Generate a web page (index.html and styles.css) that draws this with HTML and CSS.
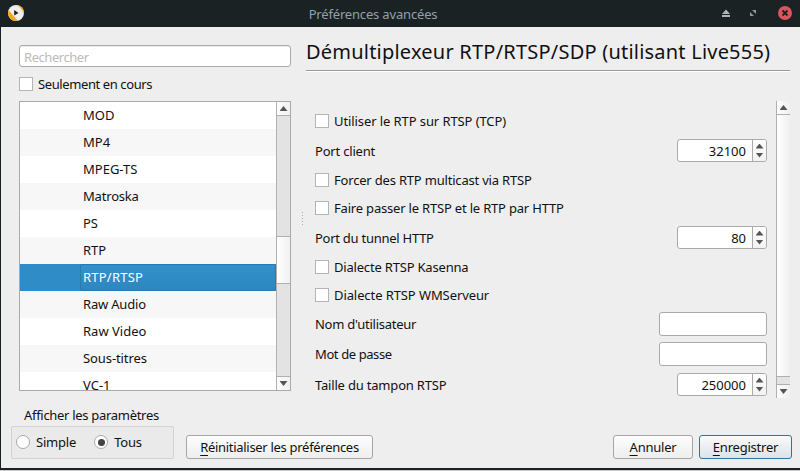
FILE: index.html
```html
<!DOCTYPE html>
<html lang="fr">
<head>
<meta charset="utf-8">
<title>Préférences avancées</title>
<link rel="stylesheet" href="styles.css">
</head>
<body>
<header class="titlebar">
  <svg class="logo" width="16" height="16" viewBox="0 0 16 16"><defs><clipPath id="disc"><circle cx="8" cy="8" r="8"/></clipPath></defs><g clip-path="url(#disc)"><path fill="#eee" d="M0 0h16v16H0z"/><path fill="#f9a51a" d="M0 4.5 10 16H0zM9 0h7v9.5C15 6 13 3 9 0z"/></g><path fill="#222" d="M6.2 5v5.6L10.5 8z"/></svg>
  <h1>Préférences avancées</h1>
  <svg class="controls" width="78" height="27" viewBox="0 0 78 27"><path fill="#a9b8b8" d="M4 14 8 9.5 12 14zM4 15h8v2H4z"/><path fill="#8d9999" d="M34 10H38v4zM32 12V16h4z"/><circle cx="67" cy="13" r="7" fill="#d9565e"/><path d="m64.5 10.5 5 5m0-5-5 5" stroke="#1b2224" stroke-width="1.8"/></svg>
</header>
<main class="window">
  <div class="upper">
    <section class="sidebar">
      <div class="search">Rechercher</div>
      <div class="check current"><i class="box"></i><span class="tight">Seulement en cours</span></div>
      <div class="tree">
        <ul>
          <li>MOD</li><li>MP4</li><li>MPEG-TS</li><li class="snug">Matroska</li><li>PS</li><li>RTP</li>
          <li class="selected"><span>RTP/RTSP</span></li>
          <li class="snug">Raw Audio</li><li>Raw Video</li><li class="near">Sous-titres</li><li>VC-1</li>
        </ul>
        <div class="scroll tree-scroll"><b class="arrow up"></b><i class="handle"></i><b class="arrow down"></b></div>
      </div>
    </section>
    <div class="splitter"><i></i><i></i><i></i><i></i><i></i></div>
    <section class="panel">
      <h2>Démultiplexeur RTP/RTSP/SDP (utilisant Live555)</h2>
      <div class="body">
        <div class="form">
          <div class="check"><i class="box"></i><span class="near">Utiliser le RTP sur RTSP (TCP)</span></div>
          <div class="field number"><span class="snug">Port client</span><div class="spin"><span>32100</span><div class="steps"><i class="up"></i><i class="down"></i></div></div></div>
          <div class="check"><i class="box"></i><span class="snug">Forcer des RTP multicast via RTSP</span></div>
          <div class="check"><i class="box"></i><span class="snug">Faire passer le RTSP et le RTP par HTTP</span></div>
          <div class="field number"><span class="close">Port du tunnel HTTP</span><div class="spin"><span>80</span><div class="steps"><i class="up"></i><i class="down"></i></div></div></div>
          <div class="check"><i class="box"></i><span class="snug">Dialecte RTSP Kasenna</span></div>
          <div class="check"><i class="box"></i><span class="near">Dialecte RTSP WMServeur</span></div>
          <div class="field"><span class="close">Nom d'utilisateur</span><div class="line"></div></div>
          <div class="field"><span class="tight">Mot de passe</span><div class="line"></div></div>
          <div class="field number"><span class="snug">Taille du tampon RTSP</span><div class="spin"><span>250000</span><div class="steps"><i class="up"></i><i class="down"></i></div></div></div>
        </div>
        <div class="scroll form-scroll"><b class="arrow up"></b><i class="handle"></i><b class="arrow down"></b></div>
      </div>
    </section>
  </div>
  <footer>
    <div class="mode">
      <div class="caption">Afficher les paramètres</div>
      <div class="group"><i class="radio"></i><span>Simple</span><i class="radio on"></i><span>Tous</span></div>
    </div>
    <div class="button reset"><span><u>R</u>éinitialiser les préférences</span></div>
    <div class="button cancel"><span><u>A</u>nnuler</span></div>
    <div class="button save"><span><u>E</u>nregistrer</span></div>
  </footer>
</main>
<div class="edge"></div>
</body>
</html>
```
FILE: styles.css
```css
* { box-sizing: border-box; }
body { margin: 0; width: 800px; height: 471px; overflow: hidden; background: #eee; color: #111; font: 13px/18px "Noto Sans", sans-serif; white-space: nowrap; }
h1, h2, ul { margin: 0; padding: 0; font-weight: 400; list-style: none; }
.near { letter-spacing: -.09px; }
.snug { letter-spacing: -.19px; }
.close { letter-spacing: -.26px; }
.tight { letter-spacing: -.4px; }
.titlebar { height: 27px; background: #1b2224; display: grid; grid-template-columns: 78px 1fr 78px; padding: 0 4px 0 8px; align-items: center; }
.logo { margin-top: -1px; }
h1 { text-align: center; font-size: 13px; line-height: 18px; letter-spacing: -.17px; color: #939fac; margin-right: 58px; }
.window { height: 441px; border-left: 1px solid #1b2224; }
.upper { display: flex; height: 371px; padding: 18px 10px 0 18px; }
.sidebar { width: 272px; }
.search { height: 22px; border: 1px solid #aaa; border-radius: 3px; background: #fff; color: #bbb; padding: 2px 4px 0; line-height: 18px; letter-spacing: -.45px; box-shadow: inset 0 1px #eee; }
.check { display: flex; align-items: center; gap: 5px; }
.current { height: 14px; margin: 10px 0; }
.box { width: 14px; height: 14px; border: 1px solid #b4b4b4; background: #fff; }
.tree { height: 290px; border: 1px solid #aaa; background: #fff; display: grid; grid-template-columns: 256px 14px; overflow: hidden; }
.tree ul { height: 288px; overflow: hidden; }
.tree li { height: 27px; line-height: 27px; padding-left: 63px; }
.tree li:last-child { height: 18px; }
.tree li:nth-child(even) { background: #f7f7f7; }
.tree .selected { background: #308cc6; color: #fff; padding-left: 60px; }
.selected span { display: block; height: 27px; line-height: 25px; padding-left: 2px; letter-spacing: .22px; border: 1px solid #2a7aad; background: linear-gradient(#3291cc, #2e86be); border-radius: 2px; }
.scroll { border-left: 1px solid #b0b0b0; background: #e3e3e3; display: flex; flex-direction: column; }
.arrow { height: 14px; background: linear-gradient(90deg, #fdfdfd, #f0f0f0); display: grid; place-items: center; }
.arrow.up { border-bottom: 1px solid #b0b0b0; }
.arrow.down { border-top: 1px solid #b0b0b0; }
.up::before, .down::before { content: ""; width: 8px; height: 5px; background: #555; clip-path: polygon(50% 0, 100% 100%, 0 100%); }
.down::before { clip-path: polygon(0 0, 100% 0, 50% 100%); }
.handle { border: solid #b0b0b0; border-width: 1px 0; background: linear-gradient(90deg, #fff, #f0f0f0); }
.tree-scroll .handle { height: 48px; margin: 120px 0 auto; }
.splitter { width: 15px; padding: 167px 0 0 11px; display: flex; flex-direction: column; gap: 2px; }
.splitter i { width: 1px; height: 1px; background: #aaa; }
.panel { width: 484px; }
h2 { height: 33px; font-size: 20px; line-height: 26px; letter-spacing: .215px; margin-top: -7px; padding-top: 1px; border-bottom: 1px solid #999; box-shadow: 0 1px #fff; }
.body { display: flex; justify-content: space-between; padding: 30px 0 0 9px; }
.form { width: 452px; display: grid; padding-top: 5px; grid-template-rows: 30px 30px 28px 28px 32px 26px 30px 28px 32px 30px; }
.field { display: flex; justify-content: space-between; align-items: center; }
.number { padding-bottom: 1px; }
.spin, .line { border: 1px solid #aaa; border-radius: 3px; background: #fff; }
.line { width: 108px; height: 24px; }
.spin { width: 90px; height: 23px; display: flex; justify-content: flex-end; align-items: center; overflow: hidden; }
.spin > span { padding: 1px 6px 0 0; }
.steps { width: 14px; height: 21px; border-left: 1px solid #aaa; background: linear-gradient(#fff, #f2f2f2); display: flex; flex-direction: column; align-items: center; justify-content: center; gap: 4px; }
.steps i { height: 5px; display: flex; }
.form-scroll { width: 14px; height: 297px; }
.form-scroll .handle { height: 262px; border-top: 0; }
.form-scroll .down { margin-top: auto; }
footer { display: flex; height: 70px; padding: 0 8px 0 10px; align-items: flex-start; }
.mode { width: 163px; padding-top: 8px; }
.caption { padding-left: 13px; letter-spacing: -.3px; }
.group { height: 33px; margin-top: 2px; border: 1px solid #d2d2d2; border-radius: 2px; background: #eaeaea; display: flex; align-items: center; padding: 0 0 1px 4px; }
.group span { margin: 0 18px 0 6px; letter-spacing: -.2px; }
.radio { width: 14px; height: 14px; border: 1px solid #aaa; border-radius: 50%; background: #fff; display: grid; place-items: center; }
.on::before { content: ""; width: 7px; height: 7px; border-radius: 50%; background: #444; }
.button { height: 24px; margin-top: 37px; border: 1px solid #a6a6a6; border-radius: 3px; background: linear-gradient(#fdfdfd, #eee); display: flex; align-items: center; justify-content: center; letter-spacing: -.22px; }
.button u { text-underline-offset: 3px; }
.reset { width: 187px; margin-left: 12px; letter-spacing: -.3px; }
.cancel { width: 80px; margin-left: auto; }
.save { width: 93px; margin-left: 6px; border-color: #2f73a0; background: linear-gradient(#f9fafb, #dce3ea); }
.edge { height: 3px; background: #1b2224; border-bottom: 1px solid #c8c8c8; }
```
